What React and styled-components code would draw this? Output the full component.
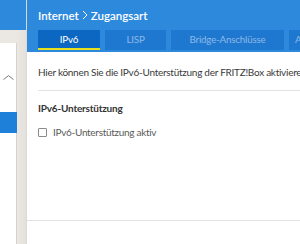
import React from 'react';
import styled, { createGlobalStyle } from 'styled-components';

const Global = createGlobalStyle`
  html, body {
    margin: 0;
    padding: 0;
    background: #fff;
  }
  body {
    font-family: Lato, "Open Sans", sans-serif;
    overflow: hidden;
  }
`;

const Page = styled.div`
  display: flex;
  width: 300px;
  height: 244px;
  overflow: hidden;
`;

const Sidebar = styled.aside`
  width: 27px;
  flex: none;
  display: flex;
  flex-direction: column;
  background: linear-gradient(90deg, #ebe8e3 0%, #ebe8e3 60%, #e4e1dc 100%);
  border-right: 1px solid #dcd9d4;
  box-sizing: border-box;
`;

const SideTop = styled.div`
  height: 30px;
  background: #2d89dc;
`;

const MenuCard = styled.div`
  margin-top: 13px;
  width: 17px;
  flex: 1;
  background: #fff;
  border-right: 1px solid #d6d3ce;
  box-sizing: border-box;
  display: flex;
  flex-direction: column;
`;

const Chevron = styled.div`
  display: flex;
  height: 5px;
  margin-top: 32px;
  padding-left: 3px;
`;

const MenuActive = styled.div`
  margin-top: 32px;
  height: 21px;
  margin-right: -1px;
  background: #1f80da;
`;

const Main = styled.main`
  flex: 1;
  display: flex;
  flex-direction: column;
  min-width: 0;
`;

const Header = styled.header`
  height: 52px;
  background: #2d89dc;
  padding-left: 11px;
  box-sizing: border-box;
  display: flex;
  flex-direction: column;
`;

const Title = styled.div`
  height: 30px;
  display: flex;
  align-items: center;
  color: #fff;
  font-size: 11.5px;
  font-weight: 600;
  white-space: nowrap;
  gap: 3px;
`;

const Tabs = styled.nav`
  display: flex;
  gap: 5px;
  white-space: nowrap;
  overflow: hidden;
`;

const Tab = styled.div`
  flex: none;
  width: ${p => p.w}px;
  height: 20px;
  box-sizing: border-box;
  display: flex;
  align-items: center;
  justify-content: ${p => (p.start ? 'flex-start' : 'center')};
  padding-left: ${p => (p.start ? '6px' : '0')};
  overflow: hidden;
  font-size: 9.8px;
  letter-spacing: -0.2px;
  background: ${p => (p.active ? '#0b67c2' : '#1f78d0')};
  color: ${p => (p.active ? '#ffffff' : '#8cb9e8')};
  border-bottom: 2px solid ${p => (p.active ? '#e6e01c' : 'transparent')};
`;

const Body = styled.section`
  flex: 1;
  padding: 13px 0 0 11px;
  display: flex;
  flex-direction: column;
  color: #444;
`;

const Intro = styled.p`
  margin: 0;
  font-size: 10px;
  letter-spacing: -0.27px;
  line-height: 14px;
  white-space: nowrap;
  color: #3a3a3a;
`;

const Rule = styled.hr`
  margin: 11px 0 0;
  border: none;
  border-top: 1px solid #e3e3e3;
`;

const SectionTitle = styled.h3`
  margin: 10px 0 0;
  font-size: 10px;
  font-weight: 700;
  letter-spacing: -0.2px;
  line-height: 14px;
  color: #333;
`;

const CheckRow = styled.label`
  margin-top: 10px;
  display: flex;
  align-items: center;
  gap: 6px;
  font-size: 10px;
  letter-spacing: -0.3px;
  line-height: 14px;
  color: #5a5a5a;
`;

const Box = styled.span`
  width: 7px;
  height: 7px;
  border: 1px solid #8a8a8a;
  border-radius: 1px;
  background: #fff;
`;

const Footer = styled.div`
  margin-top: auto;
  margin-bottom: 23px;
  margin-left: -11px;
  border-top: 1px solid #e3e3e3;
`;

export default function App() {
  return (
    <>
      <Global />
      <Page>
        <Sidebar>
          <SideTop />
          <MenuCard>
            <Chevron>
              <svg width="11" height="5" viewBox="0 0 11 5">
                <polyline points="0.5,4.6 5.5,0.6 10.5,4.6" fill="none" stroke="#777" strokeWidth="1" />
              </svg>
            </Chevron>
            <MenuActive />
          </MenuCard>
        </Sidebar>
        <Main>
          <Header>
            <Title>
              <span>Internet</span>
              <svg width="6" height="10" viewBox="0 0 6 10">
                <polyline points="1,1 5,5 1,9" fill="none" stroke="#fff" strokeWidth="1" />
              </svg>
              <span>Zugangsart</span>
            </Title>
            <Tabs>
              <Tab active w={62}>IPv6</Tab>
              <Tab w={61}>LISP</Tab>
              <Tab w={113}>Bridge-Anschlüsse</Tab>
              <Tab start w={60}>Anschlusseinstellungen</Tab>
            </Tabs>
          </Header>
          <Body>
            <Intro>Hier können Sie die IPv6-Unterstützung der FRITZ!Box aktivieren.</Intro>
            <Rule />
            <SectionTitle>IPv6-Unterstützung</SectionTitle>
            <CheckRow>
              <Box />
              IPv6-Unterstützung aktiv
            </CheckRow>
            <Footer />
          </Body>
        </Main>
      </Page>
    </>
  );
}
